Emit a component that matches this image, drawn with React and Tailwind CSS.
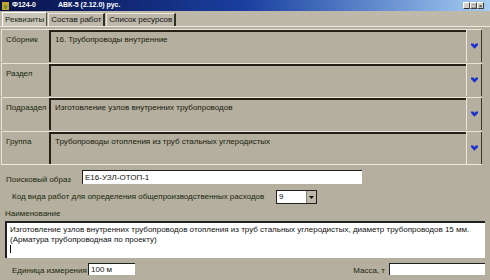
import React from 'react';

const ROWS = [
  { label: 'Сборник', value: '16. Трубопроводы внутренние' },
  { label: 'Раздел', value: '' },
  { label: 'Подраздел', value: 'Изготовление узлов внутренних трубопроводов' },
  { label: 'Группа', value: 'Трубопроводы отопления из труб стальных углеродистых' },
];

function Chevron() {
  return (
    <svg width="7" height="6" viewBox="0 0 7 6">
      <path d="M0 0.5h2.3l1.2 1.6 1.2-1.6H7v1.6L3.5 5.8 0 2.1z" fill="#1a2fd0" />
    </svg>
  );
}

function WinBtn({ children }) {
  return (
    <div className="w-[7px] h-[7px] bg-[#d4d0c8] border-t border-l border-white border-r border-b border-r-[#404040] border-b-[#404040] flex items-center justify-center text-[6px] leading-none text-black">
      {children}
    </div>
  );
}

function Row({ label, value }) {
  return (
    <div className="flex h-[33px] border-t border-[#e8e4da]">
      <div className="w-[48px] flex-shrink-0 pl-[4px] pt-[4px] text-[8px] text-[#18280c] border-l border-[#e8e4da]">
        {label}
      </div>
      <div className="flex-1 border-t-2 border-l-2 border-[#252016] pl-[4px] pt-[2px] text-[8px] text-[#18200c]">
        {value}
      </div>
      <div className="w-[16px] flex-shrink-0 border-l border-[#ece8de] border-r border-r-[#3a3628] flex items-center justify-center">
        <Chevron />
      </div>
    </div>
  );
}

export default function App() {
  return (
    <div
      className="w-[490px] h-[280px] bg-[#b5af9f] overflow-hidden flex flex-col"
      style={{ fontFamily: '"Liberation Sans", Arial, sans-serif' }}
    >
      <div className="h-[11px] flex items-center bg-gradient-to-r from-[#08124a] via-[#1a3fa0] to-[#a8cdf2] px-[2px]">
        <span className="w-[7px] h-[8px] bg-[#c8a030] mr-[3px] text-[5px] leading-none text-[#208020] font-bold flex items-end justify-center">V</span>
        <span className="text-[7px] font-bold text-white w-[46px]">Ф124-0</span>
        <span className="text-[7px] font-bold text-white">АВК-5 (2.12.0) рус.</span>
        <div className="ml-auto flex mr-[4px]">
          <WinBtn>_</WinBtn>
          <WinBtn>□</WinBtn>
          <WinBtn>×</WinBtn>
        </div>
      </div>

      <div className="h-[15px] flex items-end pl-[2px] gap-[1px] bg-[#bdb8aa]">
        <div className="h-[14px] px-[2px] border-t border-l border-white bg-[#c9c5b8] border-r border-r-[#505040] text-[8px] text-[#18280c] flex items-center">
          Реквизиты
        </div>
        <div className="h-[13px] px-[2px] border-t border-l border-[#ece8de] border-r-2 border-r-[#303020] text-[8px] text-[#101010] flex items-center">
          Состав работ
        </div>
        <div className="h-[13px] px-[2px] border-t border-l border-[#ece8de] border-r-2 border-r-[#303020] text-[8px] text-[#101010] flex items-center">
          Список ресурсов
        </div>
      </div>

      <div className="flex-1 border-t border-[#ece8de] flex flex-col pt-[2px] pl-[1px] pr-[8px]">
        <div className="flex flex-col gap-[1px] border-b border-[#ece8de]">
          {ROWS.map((r) => (
            <Row key={r.label} {...r} />
          ))}
        </div>

        <div className="flex items-center h-[16px] mt-[4px] pl-[5px]">
          <span className="w-[76px] text-[8px] text-[#18280c] pt-[5px]">Поисковый образ</span>
          <div className="w-[280px] h-[14px] bg-white border-t border-l border-[#202020] text-[8px] text-[#101010] pl-[2px] flex items-center">
            Е16-УЗЛ-ОТОП-1
          </div>
        </div>

        <div className="flex items-center h-[16px] mt-[4px] pl-[11px]">
          <span className="w-[264px] text-[8px] text-[#18280c]">
            Код вида работ для определения общепроизводственных расходов
          </span>
          <div className="w-[41px] h-[14px] bg-white border border-[#202020] flex items-center">
            <span className="flex-1 text-[8px] pl-[2px] text-[#101010]">9</span>
            <div className="w-[10px] h-full bg-[#bdb8aa] border-l border-[#808070] flex items-center justify-center">
              <svg width="5" height="3" viewBox="0 0 5 3">
                <path d="M0 0 L5 0 L2.5 3 Z" fill="#101010" />
              </svg>
            </div>
          </div>
        </div>

        <div className="text-[8px] text-[#18280c] pl-[4px] mt-[3px] h-[13px]">Наименование</div>

        <div className="h-[37px] ml-[4px] mr-[-3px] bg-white border-t-2 border-l-2 border-[#202020] text-[8px] text-[#101010] pl-[3px] pt-[2px] leading-[10px]">
          <div>Изготовление узлов внутренних трубопроводов отопления из труб стальных углеродистых, диаметр трубопроводов 15 мм.</div>
          <div>(Арматура трубопроводная по проекту)</div>
          <div className="w-px h-[8px] bg-black" />
        </div>

        <div className="flex items-start mt-[3px] mr-[-3px]">
          <div className="flex items-center pl-[11px]">
            <span className="w-[76px] text-[8px] text-[#18280c] pt-[4px]">Единица измерения</span>
            <div className="w-[47px] h-[12px] bg-white border-t border-l border-[#202020] text-[8px] text-[#101010] pl-[2px] flex items-center">
              100 м
            </div>
          </div>
          <div className="ml-auto flex items-center">
            <span className="text-[8px] text-[#18280c] mr-[4px] mt-[4px]">Масса, т</span>
            <div className="w-[96px] h-[12px] bg-white border-t border-l border-[#202020]" />
          </div>
        </div>
      </div>
    </div>
  );
}
